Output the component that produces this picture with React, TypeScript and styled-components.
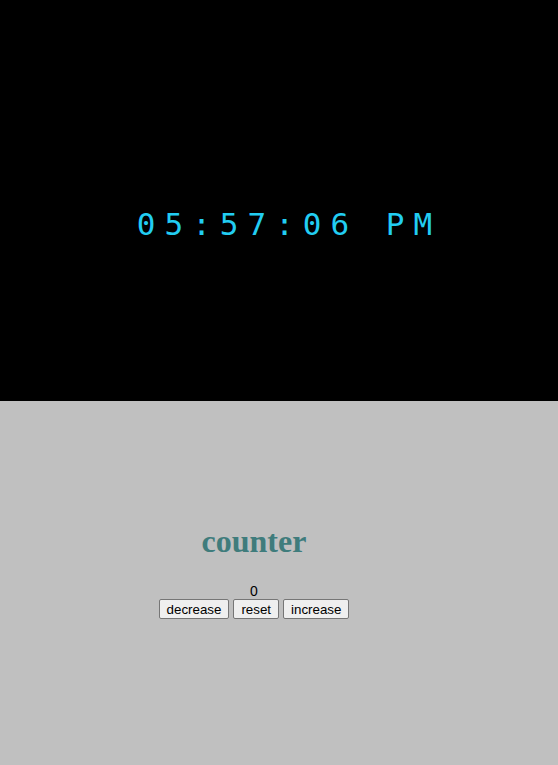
import React, { useState } from 'react';
import styled, { createGlobalStyle } from 'styled-components';

const GlobalStyle = createGlobalStyle`
  html, body {
    margin: 0;
    padding: 0;
  }
  body {
    font-family: "Liberation Sans", Arial, sans-serif;
  }
`;

const Page = styled.div`
  display: flex;
  flex-direction: column;
  height: 765px;
`;

const ClockPanel = styled.div`
  height: 401px;
  box-sizing: border-box;
  background-color: #000;
  display: flex;
  align-items: center;
  justify-content: center;
  padding-top: 47px;
  padding-left: 20px;
`;

const ClockText = styled.div`
  font-family: "DejaVu Sans Mono", monospace;
  font-size: 31px;
  letter-spacing: 9px;
  color: #22cdf2;
`;

const CounterPanel = styled.div`
  flex: 1;
  background-color: #c0c0c0;
  display: flex;
  flex-direction: column;
  align-items: center;
  padding-right: 50px;
  padding-top: 122px;
`;

const Title = styled.h1`
  font-family: "Liberation Serif", "Times New Roman", serif;
  font-size: 32px;
  font-weight: bold;
  color: #3f7c7c;
  margin: 0 0 23px;
`;

const Count = styled.div`
  font-size: 14px;
  color: #000;
  line-height: 16px;
`;

const ButtonRow = styled.div`
  display: flex;
  gap: 4px;
`;

const Button = styled.button`
  font-family: "Liberation Sans", Arial, sans-serif;
  font-size: 13.33px;
  height: 20px;
  padding: 1px 7px;
  background-color: #efefef;
  border: 1px solid #767676;
  border-radius: 2px;
  color: #000;
`;

const App: React.FC = () => {
  const [count, setCount] = useState(0);

  return (
    <>
      <GlobalStyle />
      <Page>
        <ClockPanel>
          <ClockText>05:57:06 PM</ClockText>
        </ClockPanel>
        <CounterPanel>
          <Title>counter</Title>
          <Count>{count}</Count>
          <ButtonRow>
            <Button onClick={() => setCount(count - 1)}>decrease</Button>
            <Button onClick={() => setCount(0)}>reset</Button>
            <Button onClick={() => setCount(count + 1)}>increase</Button>
          </ButtonRow>
        </CounterPanel>
      </Page>
    </>
  );
};

export default App;
